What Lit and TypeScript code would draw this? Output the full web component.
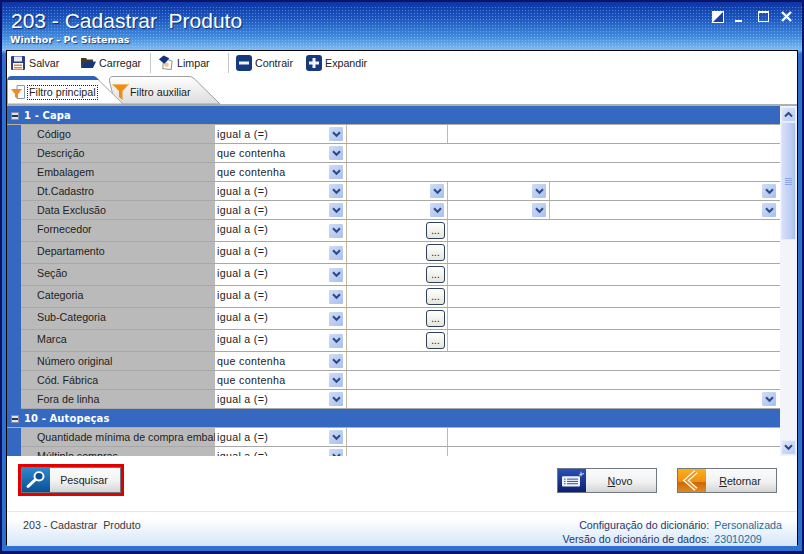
import { LitElement, html, css } from "lit";
import { customElement } from "lit/decorators.js";

type Kind = "code" | "text" | "date" | "lookup" | "select";
interface Row { label: string; op: string; kind: Kind; }

const S1: Row[] = [
  { label: "Código", op: "igual a (=)", kind: "code" },
  { label: "Descrição", op: "que contenha", kind: "text" },
  { label: "Embalagem", op: "que contenha", kind: "text" },
  { label: "Dt.Cadastro", op: "igual a (=)", kind: "date" },
  { label: "Data Exclusão", op: "igual a (=)", kind: "date" },
  { label: "Fornecedor", op: "igual a (=)", kind: "lookup" },
  { label: "Departamento", op: "igual a (=)", kind: "lookup" },
  { label: "Seção", op: "igual a (=)", kind: "lookup" },
  { label: "Categoria", op: "igual a (=)", kind: "lookup" },
  { label: "Sub-Categoria", op: "igual a (=)", kind: "lookup" },
  { label: "Marca", op: "igual a (=)", kind: "lookup" },
  { label: "Número original", op: "que contenha", kind: "text" },
  { label: "Cód. Fábrica", op: "que contenha", kind: "text" },
  { label: "Fora de linha", op: "igual a (=)", kind: "select" },
];
const S2: Row[] = [
  { label: "Quantidade mínima de compra embal", op: "igual a (=)", kind: "code" },
  { label: "Múltiplo compras", op: "igual a (=)", kind: "code" },
];

const chev = html`<span class="dd"><svg width="9" height="7" viewBox="0 0 9 7"><path d="M1 1.2 L4.5 4.8 L8 1.2" fill="none" stroke="#2c4a86" stroke-width="2"/></svg></span>`;
const dots = html`<span class="dots">...</span>`;

@customElement("app-root")
export class AppRoot extends LitElement {
  static styles = css`
    :host { display: block; width: 804px; height: 554px; overflow: hidden; font-family: "Liberation Sans", sans-serif; font-size: 10.7px; color: #222; }
    .win { box-sizing: border-box; width: 804px; height: 554px; display: flex; flex-direction: column; padding: 0 6px 6px 6px;
      border: 2px solid #0a1466; border-width: 2px 2px 3px 2px;
      background: linear-gradient(180deg, #0e35a6 0, #1b55bd 16px, #3f88dc 34px, #80bdf0 48px, #2f6fd0 52px, #2f6fd0 100%); }
    .title { height: 48px; margin: 0 -6px; padding: 0 0 0 9px; position: relative; flex: none; box-sizing: border-box; }
    .title::before { content: ""; position: absolute; inset: 4px 0 0 0; background-image: radial-gradient(circle, rgba(190,225,255,.38) 0.8px, transparent 1px); background-size: 3px 3px; pointer-events: none; }
    .t1 { font-family: "Liberation Sans", sans-serif; font-size: 21px; color: #fff; line-height: 24px; padding-top: 7px; white-space: pre; text-shadow: 1px 1px 1px #0a2a70; position: relative; }
    .t2 { font-family: "DejaVu Sans", sans-serif; font-weight: bold; font-size: 9.5px; color: #fff; line-height: 12px; margin: 1px 0 0 -1px; text-shadow: 1px 1px 1px #123a80; position: relative; }
    .ctl { position: absolute; top: 9px; left: 708px; display: flex; }
    .panel { flex: 1; background: #fff; border: 1px solid #000; border-width: 1px 1px 0 1px; display: flex; flex-direction: column; min-height: 0; margin: 0 -2px 0 -2px; }
    .tb { height: 25px; flex: none; display: flex; align-items: center; padding: 0 0 2px 3px; box-sizing: border-box; }
    .ti { display: flex; align-items: center; gap: 3px; color: #222; }
    .sep { width: 1px; height: 20px; background: #c8c8c8; }
    .tabs { height: 30px; flex: none; position: relative; border-bottom: 2px solid #a9b2b0; box-sizing: border-box; }
    .tabs svg { position: absolute; left: 0; top: 0; }
    .tl { position: absolute; line-height: 13px; white-space: nowrap; }
    .tl.a { left: 20px; top: 9px; border: 1px dotted #222; width: 68px; height: 13px; padding: 0 0 0 1px; }
    .tl.b { left: 123px; top: 10px; }
    .grid { height: 350px; flex: none; position: relative; display: flex; }
    .sc { flex: 1; overflow: hidden; min-width: 0; }
    .hd { height: 19px; background: #3568c0; color: #fff; font-weight: bold; font-family: "DejaVu Sans", sans-serif; font-size: 10px; letter-spacing: .1px; display: flex; align-items: center; gap: 5px; padding: 1px 0 0 4px; border-bottom: 1px solid #b4b0a0; box-sizing: border-box; }
    .hd .box { width: 8px; height: 8px; background: #dfe4ea; border: 1px solid #8090a8; box-sizing: border-box; display: flex; align-items: center; justify-content: center; }
    .hd .box i { display: block; width: 6px; height: 2px; background: #334; }
    .rowwrap { display: flex; background: #3568c0; padding-left: 14px; }
    .rows { flex: 1; min-width: 0; background: #fff; }
    .row { display: grid; grid-template-columns: 194px 132px 101px 102px 1fr; height: 19px; box-sizing: border-box; border-bottom: 1px solid #a8a8a8; }
    .row.tall { height: 22px; }
    .lab { background: #bababa; padding-left: 16px; white-space: nowrap; overflow: hidden; line-height: 18px; color: #222; }
    .op { display: flex; align-items: center; justify-content: space-between; padding: 0 3px 0 2px; border-right: 1px solid #c8b8a0; background: #fff; }
    .op span:first-child { line-height: 18px; letter-spacing: .3px; }
    .tall .op span:first-child { margin-top: -3px; }
    .c { border-right: 1px solid #c8b8a0; display: flex; align-items: center; justify-content: flex-end; padding-right: 3px; min-width: 0; }
    .c.last { border-right: 0; padding-right: 4px; }
    .span2 { grid-column: span 2; }
    .span3 { grid-column: span 3; }
    .dd { width: 14px; height: 14px; background: linear-gradient(135deg, #cfdcf6, #a9c0ee); display: flex; align-items: center; justify-content: center; border-radius: 1px; flex: none; }
    .dots { width: 19px; height: 17px; box-sizing: border-box; border: 1px solid #30405a; border-radius: 3px; background: linear-gradient(#fff, #e6e6dc); color: #111; font-size: 10px; line-height: 15px; text-align: center; flex: none; margin-right: -1px; }
    .vs { width: 17px; flex: none; background: #f2f4fa; display: flex; flex-direction: column; padding: 1px; box-sizing: border-box; }
    .sb { width: 15px; height: 15px; flex: none; background: linear-gradient(135deg, #dde6fa, #b9cbf3); border: 1px solid #e8eefc; box-sizing: border-box; display: flex; align-items: center; justify-content: center; }
    .thumb { height: 118px; flex: none; background: linear-gradient(90deg, #d6e0f8, #bccdf4 70%, #aabfee); display: flex; align-items: center; justify-content: center; flex-direction: column; gap: 1px; border: 1px solid #e4ebfb; box-sizing: border-box; }
    .thumb i { display: block; width: 7px; height: 1px; background: #8ea6d8; }
    .track { flex: 1; }
    .actions { height: 56px; flex: none; display: flex; align-items: flex-start; box-sizing: border-box; padding: 12px 0 0 11px; border-bottom: 1px solid #dce8f4; }
    .redbox { border: 3px solid #e00000; display: flex; margin-top: -4px; }
    .btn { height: 25px; width: 100px; box-sizing: border-box; border: 1px solid #70787f; display: flex; align-items: stretch; background: linear-gradient(180deg, #fbfbfb, #f2f2f2 55%, #d4d4d4); color: #222; }
    .btn .ic { width: 28px; flex: none; display: block; }
    .btn .tx { flex: 1; display: flex; align-items: center; justify-content: center; padding-right: 2px; }
    .redbox .btn { height: 26px; }
    .novo { margin-right: 20px; }
    .ret { margin-right: 20px; }
    .spacer { flex: 1; }
    .foot { flex: 1; display: flex; justify-content: space-between; align-items: flex-start; padding: 6px 15px 0 16px; background: linear-gradient(180deg, #fff 20%, #d4e5f9); color: #3a3a3a; }
    .foot > span { white-space: pre; line-height: 14px; }
    .fr { display: grid; grid-template-columns: auto auto; column-gap: 5px; line-height: 14px; justify-items: end; color: #1e3a6a; }
    .fr b { font-weight: normal; color: #1a6f9c; justify-self: start; }
    .w70 { width: 70px; }
    .m7 { margin-right: 7px; }
  `;

  private cells(r: Row) {
    const op = html`<div class="op"><span>${r.op}</span>${chev}</div>`;
    switch (r.kind) {
      case "code": return html`${op}<div class="c"></div><div class="c last span2"></div>`;
      case "text": return html`${op}<div class="c last span3"></div>`;
      case "date": return html`${op}<div class="c">${chev}</div><div class="c">${chev}</div><div class="c last">${chev}</div>`;
      case "lookup": return html`${op}<div class="c">${dots}</div><div class="c last span2"></div>`;
      case "select": return html`${op}<div class="c last span3">${chev}</div>`;
    }
  }

  private section(title: string, rows: Row[]) {
    return html`
      <div class="hd"><span class="box"><i></i></span><span>${title}</span></div>
      <div class="rowwrap"><div class="rows">
        ${rows.map(r => html`<div class="row ${r.kind === "lookup" ? "tall" : ""}"><div class="lab">${r.label}</div>${this.cells(r)}</div>`)}
      </div></div>`;
  }

  render() {
    return html`<div class="win">
      <div class="title">
        <div class="t1">203 - Cadastrar  Produto</div>
        <div class="t2">Winthor - PC Sistemas</div>
        <div class="ctl">
          <svg width="84" height="14" viewBox="0 0 84 14">
            <rect x="2.5" y=".5" width="11" height="11" fill="#173fa6" stroke="#fff"/><path d="M2 0 H14 L2 12 Z" fill="#fff"/>
            <rect x="25" y="9" width="7" height="2" fill="#fff"/>
            <rect x="48.5" y=".5" width="10" height="10" fill="none" stroke="#fff"/><rect x="48" y="0" width="11" height="2" fill="#fff"/>
            <path d="M72 1 L81 10 M81 1 L72 10" stroke="#fff" stroke-width="2.4"/>
          </svg>
        </div>
      </div>
      <div class="panel">
        <div class="tb">
          <div class="ti w70">
            <svg width="16" height="16" viewBox="0 0 16 16"><rect x="1" y="1" width="14" height="14" rx="1" fill="#2b3f86"/><rect x="4" y="1.5" width="8" height="5" fill="#e8e8f0"/><rect x="3" y="8" width="10" height="6.5" fill="#fff"/><rect x="4" y="9.5" width="8" height="1.5" fill="#e8862c"/><rect x="4" y="12" width="8" height="1.5" fill="#e8862c"/></svg>
            <span>Salvar</span></div>
          <div class="ti w70">
            <svg width="16" height="14" viewBox="0 0 16 14"><path d="M1 2 L6 2 L7 3.5 L13 3.5 L13 7 L4 7 L1 12 Z" fill="#4a3a20"/><path d="M4 6 L16 5.5 L13 12 L1 12 Z" fill="#16377e"/></svg>
            <span>Carregar</span></div>
          <div class="sep m7"></div>
          <div class="ti w70">
            <svg width="16" height="17" viewBox="0 0 17 17"><path d="M6 4 L15 7 L14 16 L5 15 Z" fill="#fff" stroke="#888"/><path d="M1 5 L6 1 L12 4 L7 10 Z" fill="#16337c"/><circle cx="9" cy="11" r="2.5" fill="#f0c89a"/></svg>
            <span>Limpar</span></div>
          <div class="sep m7"></div>
          <div class="ti w70">
            <svg width="16" height="16" viewBox="0 0 16 16"><rect width="16" height="16" rx="3" fill="#15387f"/><rect x="3" y="6.5" width="10" height="3" fill="#f0f4fa"/></svg>
            <span>Contrair</span></div>
          <div class="ti">
            <svg width="16" height="16" viewBox="0 0 16 16"><rect width="16" height="16" rx="3" fill="#15387f"/><path d="M3 6.5 H6.5 V3 H9.5 V6.5 H13 V9.5 H9.5 V13 H6.5 V9.5 H3 Z" fill="#f0f4fa"/></svg>
            <span>Expandir</span></div>
        </div>
        <div class="tabs">
          <svg width="240" height="29" viewBox="0 0 240 29">
            <defs><linearGradient id="g" x1="0" y1="0" x2="0" y2="1"><stop offset="0" stop-color="#fff"/><stop offset="1" stop-color="#dcdcdc"/></linearGradient></defs>
            <path d="M108 28 L102.5 5 Q102 .5 106 .5 L182 .5 Q185 .5 187 2.5 L213 28 Z" fill="url(#g)" stroke="#9aa0a0"/>
            <path d="M.5 28 L.5 4 Q.5 .5 5 .5 L86 .5 Q88 .5 90 2.5 L116 28 Z" fill="#fff" stroke="#a0a8a8"/>
            <path d="M.5 4 Q.5 0 5 0 L86 0 Q89 0 91 3 L92 4 Z" fill="#2f62b8"/>
            <path d="M10 9.5 H17.5 V22.5 H10 Z" fill="#fff" stroke="#8c96a8"/>
            <path d="M4 13 H15 L11 18 V23 L8 21 V18 Z" fill="#ee8a2a"/>
            <path d="M105 8 H122 L115.5 15 V24 L112 21 V15 Z" fill="#f08c18"/>
            <path d="M105 8 H122 L121 9 H106 Z" fill="#f8b860"/>
          </svg>
          <span class="tl a">Filtro principal</span>
          <span class="tl b">Filtro auxiliar</span>
        </div>
        <div class="grid">
          <div class="sc">
            ${this.section("1 - Capa", S1)}
            ${this.section("10 - Autopeças", S2)}
          </div>
          <div class="vs">
            <div class="sb"><svg width="9" height="7" viewBox="0 0 9 7"><path d="M1 5.5 L4.5 2 L8 5.5" fill="none" stroke="#2c4a86" stroke-width="2"/></svg></div>
            <div class="thumb"><i></i><i></i><i></i><i></i></div>
            <div class="track"></div>
            <div class="sb"><svg width="9" height="7" viewBox="0 0 9 7"><path d="M1 1.2 L4.5 4.8 L8 1.2" fill="none" stroke="#2c4a86" stroke-width="2"/></svg></div>
          </div>
        </div>
        <div class="actions">
          <div class="redbox"><div class="btn">
            <svg class="ic" viewBox="0 0 28 26" preserveAspectRatio="none"><defs><linearGradient id="b" x1="0" y1="0" x2="0" y2="1"><stop offset="0" stop-color="#2c88cc"/><stop offset="1" stop-color="#0a4f96"/></linearGradient></defs><rect width="28" height="26" fill="url(#b)"/><circle cx="17" cy="9" r="4.5" fill="#0a4f96" stroke="#fff" stroke-width="2"/><path d="M13.5 12.5 L6 20" stroke="#fff" stroke-width="3" stroke-linecap="round"/></svg>
            <span class="tx">Pesquisar</span></div></div>
          <div class="spacer"></div>
          <div class="btn novo">
            <svg class="ic" viewBox="0 0 28 25" preserveAspectRatio="none"><defs><linearGradient id="n" x1="0" y1="0" x2="0" y2="1"><stop offset="0" stop-color="#2a50b8"/><stop offset="1" stop-color="#0e1f70"/></linearGradient></defs><rect width="28" height="25" fill="url(#n)"/><rect x="4" y="8" width="18" height="11" rx="1" fill="#f0f4fa"/><path d="M9 11 H20 M9 13.5 H20 M9 16 H20 M6 11 H7.5 M6 13.5 H7.5 M6 16 H7.5" stroke="#2a4a90"/><path d="M23 3 V8 M21 6.5 L26 5" stroke="#dfe8fa"/></svg>
            <span class="tx"><span><u>N</u>ovo</span></span></div>
          <div class="btn ret">
            <svg class="ic" viewBox="0 0 28 25" preserveAspectRatio="none"><defs><linearGradient id="r" x1="0" y1="0" x2="0" y2="1"><stop offset="0" stop-color="#fbb018"/><stop offset=".55" stop-color="#f09010"/><stop offset=".56" stop-color="#c86808"/><stop offset="1" stop-color="#e08a20"/></linearGradient></defs><rect width="28" height="25" fill="url(#r)"/><path d="M18 3 L8 12.5 L18 22" fill="none" stroke="#fff" stroke-width="4.5"/><path d="M18 3 L8 12.5 L18 22" fill="none" stroke="#ee9420" stroke-width="2"/></svg>
            <span class="tx"><span><u>R</u>etornar</span></span></div>
        </div>
        <div class="foot">
          <span>203 - Cadastrar  Produto</span>
          <div class="fr"><span>Configuração do dicionário:</span><b>Personalizada</b><span>Versão do dicionário de dados:</span><b>23010209</b></div>
        </div>
      </div>
    </div>`;
  }
}
